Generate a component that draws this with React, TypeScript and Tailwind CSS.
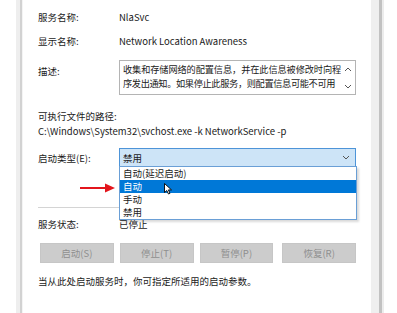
import React from "react";

const font = {
  fontFamily: '"Noto Sans CJK SC", "Noto Sans", sans-serif',
};

function Label({ children, className = "" }: { children: React.ReactNode; className?: string }) {
  return <div className={`w-[81px] shrink-0 ${className}`}>{children}</div>;
}

function Button({ children, className = "" }: { children: React.ReactNode; className?: string }) {
  return (
    <div
      className={`flex h-[20px] w-[74px] items-center justify-center border border-[#c6c6c6] bg-[#cccccc] text-[#8f8f8f] ${className}`}
    >
      {children}
    </div>
  );
}

function Chevron({ up = false }: { up?: boolean }) {
  return (
    <svg width="8" height="5" viewBox="0 0 8 5" className={up ? "rotate-180" : ""}>
      <path d="M1 1 L4 4 L7 1" fill="none" stroke="#555" strokeWidth="1" />
    </svg>
  );
}

export default function App() {
  return (
    <div
      className="flex h-[313px] w-[397px] overflow-hidden bg-white text-[9.5px] leading-[14px] text-[#1a1a1a]"
      style={font}
    >
      <div className="w-[16px] shrink-0 bg-white" />
      <div className="flex w-[7px] shrink-0">
        <div className="w-[4px] bg-[#eeeeee]" />
        <div className="w-[2px] bg-[#d2d2d2]" />
        <div className="w-[1px] bg-[#f4f4f4]" />
      </div>

      {/* dialog body */}
      <div className="relative w-[348px] shrink-0 pl-[15px] pr-[15px]">
        <div className="mt-[10px] flex">
          <Label>服务名称:</Label>
          <div>NlaSvc</div>
        </div>
        <div className="mt-[10px] flex">
          <Label>显示名称:</Label>
          <div>Network Location Awareness</div>
        </div>
        <div className="mt-[12px] flex">
          <Label className="pt-[4px]">描述:</Label>
          <div className="flex h-[35px] w-[241px] border border-[#b4b4b4] pl-[3px] pt-[1px]">
            <div className="flex-1 overflow-hidden whitespace-nowrap text-[9.2px] leading-[14px]">
              <div className="tracking-[-0.1px]">收集和存储网络的配置信息，并在此信息被修改时向程</div>
              <div className="tracking-[-0.35px]">序发出通知。如果停止此服务，则配置信息可能不可用</div>
            </div>
            <div className="flex w-[14px] shrink-0 flex-col items-center justify-between py-[5px]">
              <Chevron up />
              <Chevron />
            </div>
          </div>
        </div>

        <div className="mt-[14px]">可执行文件的路径:</div>
        <div className="mt-[1px]">C:\Windows\System32\svchost.exe -k NetworkService -p</div>

        <div className="mt-[10px] flex items-center">
          <Label>启动类型(E):</Label>
          <div className="flex h-[19px] w-[238px] items-center justify-between border border-[#4d94d8] bg-[#cde4f7] pl-[3px] pr-[5px]">
            <span>禁用</span>
            <Chevron />
          </div>
        </div>

        <div className="mt-[40px] h-px w-[318px] bg-[#d4d4d4]" />

        <div className="mt-[9px] flex">
          <Label>服务状态:</Label>
          <div>已停止</div>
        </div>

        <div className="mt-[12px] flex gap-[6px] pl-[2px]">
          <Button>启动(S)</Button>
          <Button>停止(T)</Button>
          <Button>暂停(P)</Button>
          <Button className="ml-[3px]">恢复(R)</Button>
        </div>

        <div className="mt-[11px]">当从此处启动服务时，你可指定所适用的启动参数。</div>

        {/* open dropdown list */}
        <div className="absolute left-[96px] top-[166px] w-[238px] border border-[#6a9fd6] bg-white shadow-[2px_2px_2px_rgba(0,0,0,0.15)]">
          <div className="h-[13px] pl-[3px] leading-[13px]">自动(延迟启动)</div>
          <div className="h-[13px] bg-[#0078d7] pl-[3px] leading-[13px] text-white">自动</div>
          <div className="h-[13px] pl-[3px] leading-[13px]">手动</div>
          <div className="h-[13px] pl-[3px] leading-[13px]">禁用</div>
        </div>

        {/* red arrow */}
        <svg className="absolute left-[57px] top-[183px]" width="36" height="10" viewBox="0 0 36 10">
          <line x1="0" y1="5" x2="27" y2="5" stroke="#e3151c" strokeWidth="2" />
          <path d="M25 0.5 L35 5 L25 9.5 Z" fill="#e3151c" />
        </svg>

        {/* mouse cursor */}
        <svg className="absolute left-[141px] top-[183px]" width="9" height="12" viewBox="0 0 9 12">
          <path
            d="M0.5 0.5 L0.5 9.5 L2.8 7.5 L4.5 11 L6 10.3 L4.4 6.9 L7.5 6.9 Z"
            fill="#ffffff"
            stroke="#000"
            strokeWidth="0.9"
            strokeLinejoin="round"
          />
        </svg>
      </div>

      <div className="flex w-[13px] shrink-0">
        <div className="w-[8px] bg-[#efefef]" />
        <div className="w-[3px] bg-[#c2c2c2]" />
        <div className="w-[2px] bg-[#ececec]" />
      </div>
      <div className="flex-1 bg-white" />
    </div>
  );
}
